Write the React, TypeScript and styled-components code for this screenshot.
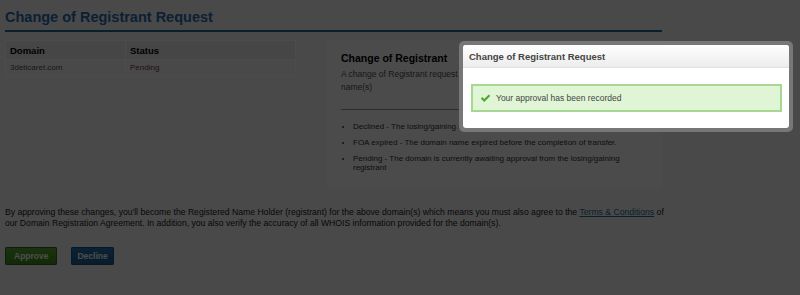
import styled, { createGlobalStyle } from 'styled-components';

const GlobalStyle = createGlobalStyle`
  html, body {
    margin: 0;
    padding: 0;
    background: #f5f5f5;
    font-family: "Liberation Sans", Arial, sans-serif;
  }
`;

type Row = { domain: string; status: string };

const rows: Row[] = [{ domain: '3deticaret.com', status: 'Pending' }];

const statuses = [
  'Declined - The losing/gaining registrar declined the request',
  'FOA expired - The domain name expired before the completion of transfer.',
  'Pending - The domain is currently awaiting approval from the losing/gaining registrant',
];

const CheckIcon = () => (
  <svg width="11" height="9" viewBox="0 0 11 9">
    <path d="M0.8 4.6 L2.4 3.1 L4.2 4.9 L8.8 0.4 L10.3 1.9 L4.2 8 Z" fill="#4ea832" />
  </svg>
);

const App = () => (
  <>
    <GlobalStyle />
    <Page>
      <Title>Change of Registrant Request</Title>
      <Main>
        <DomainTable>
          <thead>
            <tr>
              <Th>Domain</Th>
              <Th>Status</Th>
            </tr>
          </thead>
          <tbody>
            {rows.map((r) => (
              <tr key={r.domain}>
                <Td>{r.domain}</Td>
                <Td $status>{r.status}</Td>
              </tr>
            ))}
          </tbody>
        </DomainTable>
        <InfoBox>
          <InfoTitle>Change of Registrant</InfoTitle>
          <InfoText>A change of Registrant request has been submitted for the following domain name(s)</InfoText>
          <Rule />
          <StatusList>
            {statuses.map((s) => (
              <li key={s}>{s}</li>
            ))}
          </StatusList>
        </InfoBox>
      </Main>
      <Agreement>
        By approving these changes, you'll become the Registered Name Holder (registrant) for the above domain(s)
        which means you must also agree to the <a href="#">Terms &amp; Conditions</a> of our Domain Registration
        Agreement. In addition, you also verify the accuracy of all WHOIS information provided for the domain(s).
      </Agreement>
      <Actions>
        <Button $kind="approve">Approve</Button>
        <Button $kind="decline">Decline</Button>
      </Actions>

      <Backdrop />
      <Modal>
        <ModalInner>
          <ModalHeader>Change of Registrant Request</ModalHeader>
          <ModalBody>
            <Alert>
              <CheckIcon />
              <span>Your approval has been recorded</span>
            </Alert>
          </ModalBody>
        </ModalInner>
      </Modal>
    </Page>
  </>
);

export default App;

const Page = styled.div`
  position: relative;
  width: 800px;
  height: 295px;
  padding: 8px 0 0 5px;
  box-sizing: border-box;
  overflow: hidden;
`;

const Title = styled.h1`
  margin: 0;
  width: 657px;
  height: 22px;
  font-size: 14.5px;
  font-weight: bold;
  line-height: 18px;
  color: #2b6cb0;
  border-bottom: 2px solid #20698c;
`;

const Main = styled.div`
  display: flex;
  align-items: flex-start;
  gap: 31px;
  margin-top: 8px;
`;

const DomainTable = styled.table`
  width: 291px;
  border-collapse: collapse;
  border: 1px solid #ffffff;
`;

const Th = styled.th`
  height: 18px;
  padding: 0 4px;
  text-align: left;
  font-size: 9.5px;
  font-weight: bold;
  color: #000;
  background: #ebebeb;
  border: 1px solid #ffffff;
  &:first-child {
    width: 111px;
  }
`;

const Td = styled.td<{ $status?: boolean }>`
  height: 15px;
  padding: 0 4px;
  font-size: 8px;
  color: ${(p) => (p.$status ? '#7a3350' : '#555')};
  background: #f3f3f3;
  border: 1px solid #ffffff;
`;

const InfoBox = styled.div`
  width: 335px;
  height: 148px;
  box-sizing: border-box;
  padding: 12px 14px;
  background: #fafafa;
`;

const InfoTitle = styled.h3`
  margin: 0;
  font-size: 10.5px;
  line-height: 13px;
  color: #000;
`;

const InfoText = styled.p`
  margin: 3px 0 0;
  width: 300px;
  font-size: 8.5px;
  line-height: 13px;
  color: #555;
`;

const Rule = styled.hr`
  margin: 15px 0 0;
  width: 307px;
  border: 0;
  border-top: 1px solid #999;
`;

const StatusList = styled.ul`
  margin: 12px 0 0;
  padding-left: 12px;
  width: 290px;
  font-size: 8px;
  line-height: 9px;
  color: #333;
  li {
    margin-bottom: 7px;
  }
`;

const Agreement = styled.p`
  margin: 19px 0 0;
  width: 672px;
  font-size: 8.65px;
  line-height: 11px;
  color: #222;
  a {
    color: #1a6f8f;
  }
`;

const Actions = styled.div`
  display: flex;
  gap: 14px;
  margin-top: 18px;
`;

const Button = styled.button<{ $kind: 'approve' | 'decline' }>`
  height: 18px;
  padding: 0 ${(p) => (p.$kind === 'approve' ? '8px' : '5px')};
  font-family: "Liberation Sans", Arial, sans-serif;
  font-size: 8.5px;
  font-weight: bold;
  border-radius: 1px;
  cursor: pointer;
  color: #fff;
  background: ${(p) =>
    p.$kind === 'approve' ? 'linear-gradient(#5aa82e, #3f8a1a)' : 'linear-gradient(#2272b0, #1a5f96)'};
  border: 1px solid ${(p) => (p.$kind === 'approve' ? '#2f6a2a' : '#1a4f78')};
`;

const Backdrop = styled.div`
  position: absolute;
  inset: 0;
  background: rgba(0, 0, 0, 0.7);
`;

const Modal = styled.div`
  position: absolute;
  left: 459px;
  top: 41px;
  width: 334px;
  padding: 4px;
  box-sizing: border-box;
  border-radius: 5px;
  background: #777;
`;

const ModalInner = styled.div`
  background: #fff;
  border-radius: 3px;
  overflow: hidden;
`;

const ModalHeader = styled.div`
  height: 22px;
  padding: 0 6px;
  display: flex;
  align-items: center;
  font-size: 9.5px;
  font-weight: bold;
  color: #444;
  background: linear-gradient(#fff, #ececec);
  border-bottom: 1px solid #e2e2e2;
`;

const ModalBody = styled.div`
  padding: 16px 7px 16px 8px;
`;

const Alert = styled.div`
  display: flex;
  align-items: center;
  gap: 5px;
  height: 28px;
  box-sizing: border-box;
  padding: 0 7px;
  font-size: 8.5px;
  color: #444;
  background: #e0f5d6;
  border: 2px solid #a7d792;
`;
